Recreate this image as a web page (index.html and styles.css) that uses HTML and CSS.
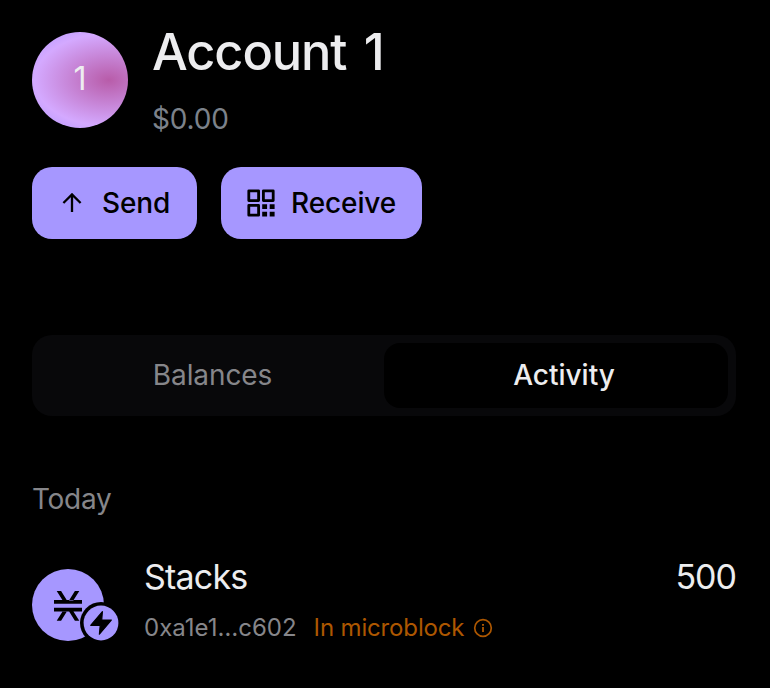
FILE: index.html
```html
<!DOCTYPE html>
<html lang="en">
<head>
<meta charset="utf-8">
<title>Account 1</title>
<link rel="stylesheet" href="styles.css">
</head>
<body>
<main class="page">
  <header class="account">
    <div class="avatar"><span>1</span></div>
    <div class="account-info">
      <h1 class="account-name">Account 1</h1>
      <div class="account-balance">$0.00</div>
    </div>
  </header>
  <div class="actions">
    <button class="button send">
      <svg class="icon-arrow" width="20" height="20" viewBox="0 0 20 20"><path d="M10 19V1.5M1.4 10L10 1.4L18.6 10" fill="none" stroke="currentColor" stroke-width="2.3"/></svg>
      <span>Send</span>
    </button>
    <button class="button receive">
      <svg width="28" height="28" viewBox="0 0 28 28"><g fill="none" stroke="currentColor" stroke-width="2.8" stroke-linejoin="round"><path d="M1.8 1.8h9.8v9.8h-9.8zM16.4 1.8h9.8v9.8h-9.8zM1.8 16.4h9.8v9.8h-9.8z"/></g><path fill="currentColor" d="M15.2 15.2h4.9v4.9h-4.9zM22.7 15.2h4.9v4.9h-4.9zM15.2 22.7h4.9v4.9h-4.9zM22.7 22.7h4.9v4.9h-4.9z"/></svg>
      <span>Receive</span>
    </button>
  </div>
  <nav class="tabs">
    <button class="tab"><span class="balances">Balances</span></button>
    <button class="tab active"><span class="activity">Activity</span></button>
  </nav>
  <section>
    <h2 class="date">Today</h2>
    <div class="transaction">
      <div class="token">
        <svg class="stx" width="28" height="30" viewBox="0 0 28 30"><path fill="currentColor" d="M0 9H28V12.8H0zM0 16.8H28V20.6H0zM2.7 0H7.1L13 9.5H8.7zM25.3 0H20.9L15 9.5H19.3zM2.7 29.8H7.1L13 20.2H8.7zM25.3 29.8H20.9L15 20.2H19.3z"/></svg>
        <svg class="badge" width="42" height="42" viewBox="0 0 42 42"><circle cx="21" cy="22" r="21" fill="#000"/><circle cx="21" cy="22" r="17.4" fill="#a697ff"/><path d="M22.4 10.7L10.7 24.3H20.2L19.4 33.2L31.3 19H21.7Z" fill="#000" stroke="#000" stroke-width="1.2" stroke-linejoin="round"/></svg>
      </div>
      <div class="details">
        <div class="token-name">Stacks</div>
        <div class="meta">
          <span class="hash">0xa1e1…c602</span>
          <span class="status">In microblock</span>
          <svg class="info" width="20" height="20" viewBox="0 0 20 20"><circle cx="10" cy="10" r="8.3" fill="none" stroke="currentColor" stroke-width="1.7"/><path d="M9.1 9h1.8v5.1H9.1zM9 6h2v1.8H9z" fill="currentColor"/></svg>
        </div>
      </div>
      <div class="amount">500</div>
    </div>
  </section>
</main>
</body>
</html>
```
FILE: styles.css
```css
* { box-sizing: border-box; }
body {
  margin: 0;
  background: #000;
  color: #ededef;
  font-family: Inter, "Liberation Sans", sans-serif;
}
button { font: inherit; border: 0; padding: 0; }
svg { display: block; flex: none; }
.page { height: 688px; padding: 32px 34px 0 32px; overflow: hidden; }
.account { display: flex; gap: 24px; height: 96px; }
.avatar {
  display: flex;
  align-items: center;
  justify-content: center;
  width: 96px;
  height: 96px;
  flex: none;
  border-radius: 50%;
  background: radial-gradient(ellipse at 80% 50%, #b85ca9 0%, #d4a9ff 68%, #c8a3ff 78%, #d4a9ff 88%);
  font-size: 32px;
  line-height: 40px;
}
.avatar span { margin-top: -3px; }
.account-name {
  margin: -12px 0 0;
  font-size: 50.5px;
  line-height: 64px;
  font-weight: 500;
  letter-spacing: -1.1px;
  word-spacing: 5px;
  white-space: nowrap;
}
.account-balance {
  margin-top: 15px;
  color: #7c828b;
  font-size: 28px;
  line-height: 40px;
  letter-spacing: -0.2px;
}
.actions { display: flex; gap: 24px; margin-top: 39px; }
.button {
  display: flex;
  align-items: center;
  height: 72px;
  border-radius: 20px;
  background: #a697ff;
  color: #000;
  font-size: 28px;
  font-weight: 500;
  letter-spacing: -0.1px;
}
.send { width: 165px; padding-left: 30px; gap: 20px; }
.receive { width: 201px; padding-left: 26px; gap: 16px; }
.tabs {
  display: flex;
  width: 704px;
  height: 81px;
  margin-top: 96px;
  padding: 8px;
  border-radius: 20px;
  background: #08080a;
}
.tab {
  width: 344px;
  padding: 0 0 1px 1px;
  border-radius: 16px;
  background: transparent;
  color: #86868a;
  font-size: 28px;
  letter-spacing: -0.1px;
}
.active {
  padding-left: 16px;
  background: #000;
  color: #ededef;
  font-weight: 500;
  letter-spacing: 0;
}
.date {
  margin: 63px 0 0;
  color: #86868a;
  font-size: 28px;
  line-height: 40px;
  font-weight: 400;
  letter-spacing: -0.3px;
}
.transaction { display: flex; margin-top: 38px; height: 84px; }
.token {
  position: relative;
  width: 72px;
  height: 72px;
  margin-top: 12px;
  flex: none;
  display: flex;
  align-items: center;
  justify-content: center;
  border-radius: 50%;
  background: #a697ff;
  color: #000;
}
.stx { margin-top: 2px; }
.badge { position: absolute; left: 48px; top: 32px; }
.details { margin-left: 40px; flex: 1; }
.token-name { font-size: 34px; line-height: 40px; letter-spacing: -0.8px; }
.meta {
  display: flex;
  align-items: center;
  margin-top: 15px;
  color: #86868a;
  font-size: 24px;
  line-height: 32px;
  white-space: nowrap;
}
.status { margin-left: 17px; color: #ad5700; letter-spacing: -0.15px; }
.info { margin-left: 9px; color: #ad5700; }
.amount { font-size: 34px; line-height: 40px; letter-spacing: -1px; }
```
